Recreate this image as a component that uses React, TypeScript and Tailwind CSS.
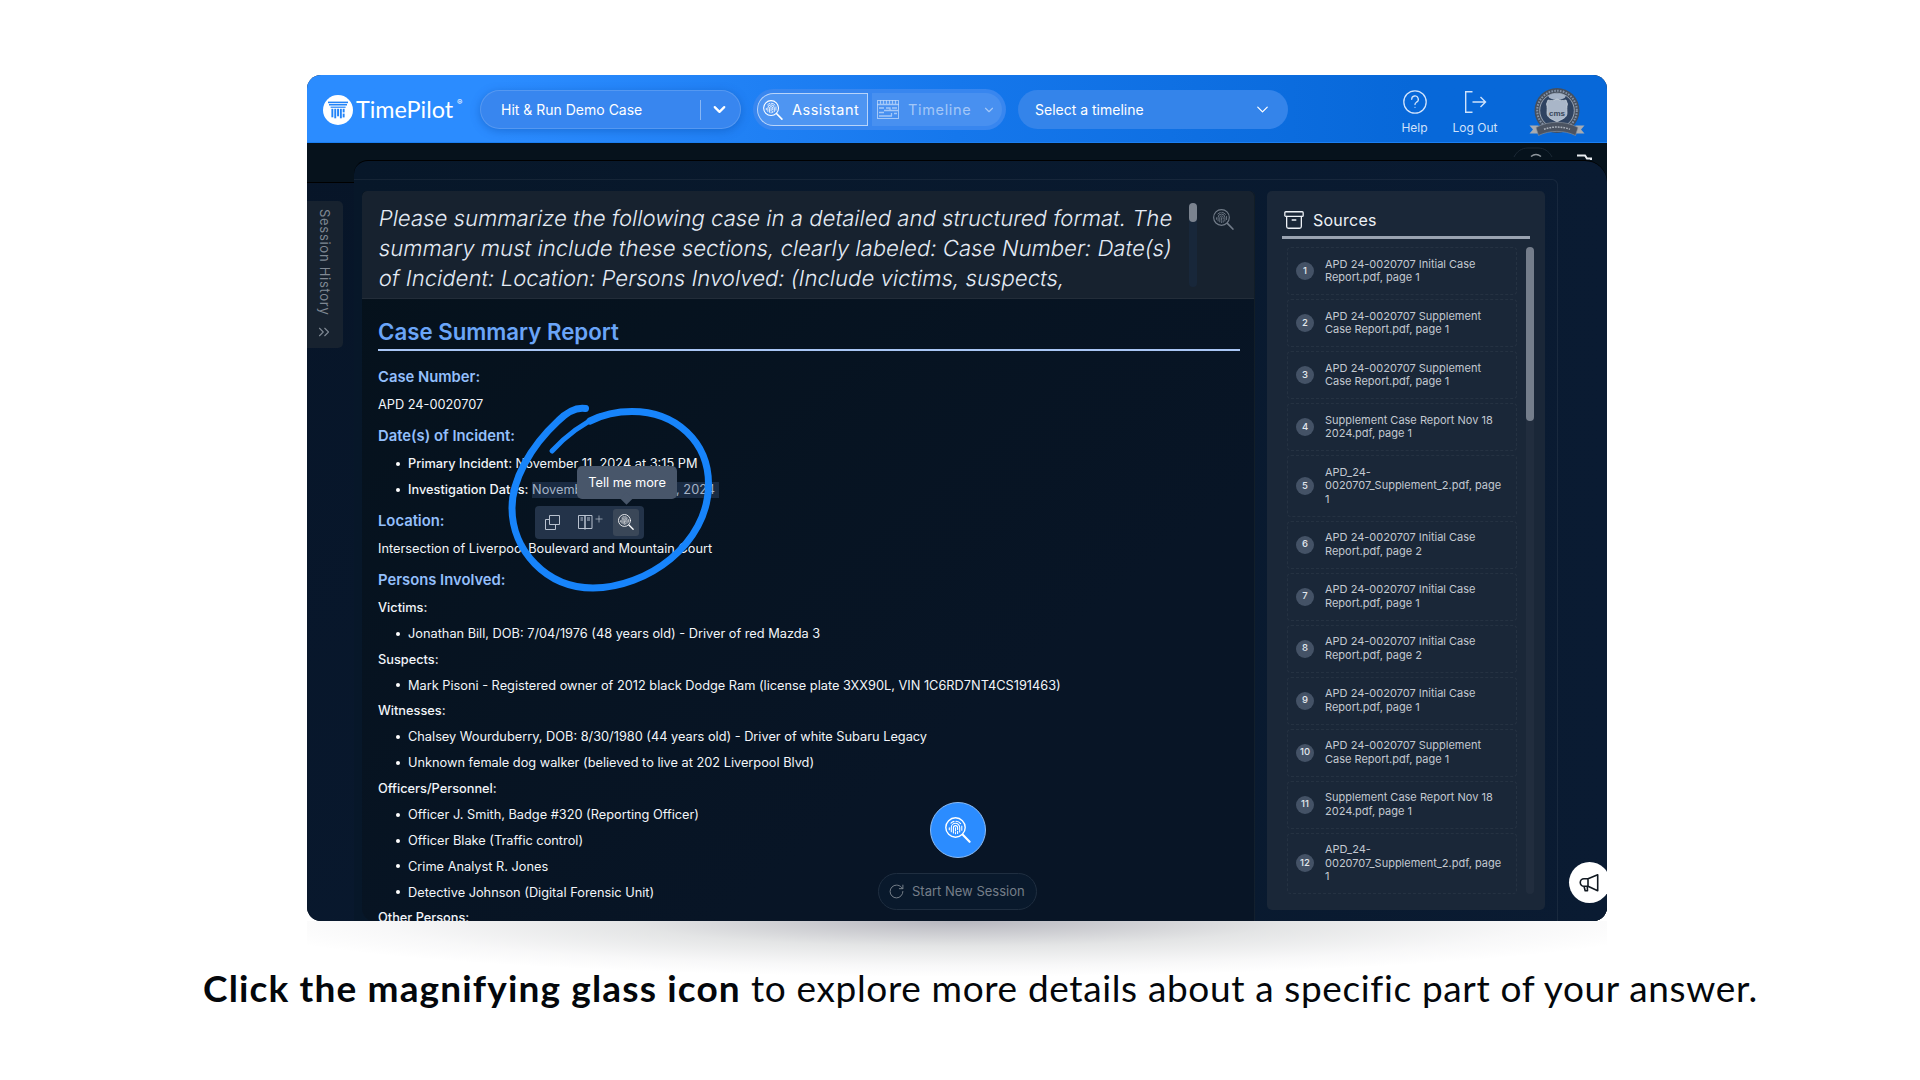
import { Archive, ChevronDown, ChevronsRight, RotateCw } from 'lucide-react'

const sources = [
  'APD 24-0020707 Initial Case Report.pdf, page 1',
  'APD 24-0020707 Supplement Case Report.pdf, page 1',
  'APD 24-0020707 Supplement Case Report.pdf, page 1',
  'Supplement Case Report Nov 18 2024.pdf, page 1',
  'APD_24-0020707_Supplement_2.pdf, page 1',
  'APD 24-0020707 Initial Case Report.pdf, page 2',
  'APD 24-0020707 Initial Case Report.pdf, page 1',
  'APD 24-0020707 Initial Case Report.pdf, page 2',
  'APD 24-0020707 Initial Case Report.pdf, page 1',
  'APD 24-0020707 Supplement Case Report.pdf, page 1',
  'Supplement Case Report Nov 18 2024.pdf, page 1',
  'APD_24-0020707_Supplement_2.pdf, page 1',
]

const persons = [
  { label: 'Victims:', items: ['Jonathan Bill, DOB: 7/04/1976 (48 years old) - Driver of red Mazda 3'] },
  {
    label: 'Suspects:',
    items: ['Mark Pisoni - Registered owner of 2012 black Dodge Ram (license plate 3XX90L, VIN 1C6RD7NT4CS191463)'],
  },
  {
    label: 'Witnesses:',
    items: [
      'Chalsey Wourduberry, DOB: 8/30/1980 (44 years old) - Driver of white Subaru Legacy',
      'Unknown female dog walker (believed to live at 202 Liverpool Blvd)',
    ],
  },
  {
    label: 'Officers/Personnel:',
    items: [
      'Officer J. Smith, Badge #320 (Reporting Officer)',
      'Officer Blake (Traffic control)',
      'Crime Analyst R. Jones',
      'Detective Johnson (Digital Forensic Unit)',
    ],
  },
  { label: 'Other Persons:', items: [] },
]

function FingerprintSearch({ className }: { className?: string }) {
  return (
    <svg className={className} viewBox="0 0 26 26" fill="none" stroke="currentColor" strokeLinecap="round" aria-hidden="true">
      <circle cx="10.5" cy="10.5" r="9.7" strokeWidth="1.4" />
      <path d="M17.8 17.8L24.6 24.8" strokeWidth="2.1" />
      <g strokeWidth="1.1">
        <path d="M6 6.2A6.3 6.3 0 0 1 9 4.4M11 4.2a6.3 6.3 0 0 1 4.6 2.4" />
        <path d="M4.3 10.8v2M16.8 9v4.2" />
        <path d="M6.3 14.8v-4.3a4.2 4.2 0 0 1 8.4 0v4.5" />
        <path d="M8.4 16v-5.3a2.1 2.1 0 0 1 4.2 0v1.8M12.6 14.4v2" />
        <path d="M10.5 10.8v3.2M10.5 15.6v1.2" />
      </g>
    </svg>
  )
}

function LogoMark() {
  return (
    <svg className="size-[30px]" viewBox="0 0 30 30" aria-hidden="true">
      <circle cx="15" cy="15" r="15" fill="#fff" />
      <g fill="#2384f8">
        <rect x="5" y="6.6" width="20" height="1.6" />
        <rect x="6" y="9" width="18" height="1.5" />
        <rect x="7.6" y="11.6" width="15" height="1.2" />
        <rect x="8.4" y="13.8" width="1.9" height="8.5" />
        <rect x="11.3" y="13.8" width="1.9" height="9.5" />
        <rect x="14.1" y="13.8" width="1.9" height="7.5" />
        <rect x="16.9" y="13.8" width="1.9" height="9.5" />
        <rect x="19.7" y="13.8" width="1.9" height="3.6" />
        <rect x="19.7" y="18.6" width="1.9" height="3.8" />
      </g>
    </svg>
  )
}

function Badge() {
  return (
    <svg className="h-[50px] w-[56px]" viewBox="0 0 56 50" aria-hidden="true">
      <circle cx="28" cy="23.5" r="22.5" fill="#46505f" />
      <circle cx="28" cy="23.5" r="19.8" fill="none" stroke="#8593a8" strokeWidth="2" strokeDasharray="1.6 1.3" />
      <circle cx="28" cy="23.5" r="17.3" fill="#2f4361" stroke="#b3bdc9" strokeWidth=".8" />
      <ellipse cx="28" cy="9.6" rx="8.5" ry="3.2" fill="#a4b2c6" />
      <path d="M19 13c3 1 6 .4 9-1 3 1.400 6 2 9 1l1.500 4c-1 3-.5 6-.5 9 0 5-5 6-10 9-5-3-10-4-10-9 0-3 .5-6-.5-9z" fill="#a9b6c8" stroke="#cfd7e0" strokeWidth=".7" />
      <text x="28" y="29" textAnchor="middle" fontFamily="Liberation Sans" fontWeight="700" fontSize="8" fill="#39465a">cms</text>
      <path d="M.5 38.500h9v8h-9l3.500-4zM55.500 38.500h-9v8h9l-3.500-4z" fill="#a8abb0" />
      <path d="M7 40.500c13-7 29-7 42 0l-2.500 8c-11-5.500-26-5.500-37 0z" fill="#4b5361" stroke="#8a929e" strokeWidth=".6" />
      <path d="M15 42.300c8-3 18-3 26 0" fill="none" stroke="#a9b0ba" strokeWidth="1.500" strokeDasharray="1.800 1" />
    </svg>
  )
}

function Header() {
  return (
    <header className="flex h-[68px] items-center border-b border-[#1b7ff2] bg-gradient-to-r from-[#2b8cff] from-15% via-[#1577ec] via-50% to-[#0768d9] to-85% pt-[2px] pl-4 text-white">
      <LogoMark />
      <span className="ml-[3px] w-[97px] whitespace-nowrap font-[Lato] text-[23.400px] leading-none">TimePilot</span>
      <span className="-mt-4 ml-[4px] w-[23px] text-[8px]">®</span>

      <div className="flex h-[39px] w-[261px] items-center rounded-full border border-white/15 bg-[#3886ef] pl-5 shadow-[0_2px_10px_rgba(0,60,150,0.35)]">
        <span className="text-sm">Hit &amp; Run Demo Case</span>
        <span className="ml-auto h-5 w-px bg-white/40" />
        <ChevronDown className="mr-[11px] ml-[9px] size-[19px]" strokeWidth={2.8} />
      </div>

      <div className="ml-[12px] flex h-[41px] w-[253px] items-center gap-1 rounded-full bg-[#3886ef] px-1">
        <div className="flex h-[33px] w-[111px] items-center rounded-l-full rounded-r-[4px] border border-white/60 bg-[#4e95f2] pl-[5px]">
          <FingerprintSearch className="size-5" />
          <span className="ml-[9px] text-[14.500px] tracking-[0.035em]">Assistant</span>
        </div>
        <div className="flex h-[33px] w-[130px] items-center rounded-l-[4px] rounded-r-full bg-[#4890f0] pl-[5px] text-white/50">
          <svg className="h-[19px] w-[22px]" viewBox="0 0 22 19" fill="none" stroke="currentColor" aria-hidden="true">
            <rect x=".5" y=".5" width="21" height="18" />
            <path d="M.5 4.500h21M3.500.5v4M6.500.5v4M9.500.5v4M12.500.5v4M15.500.5v4M18.500.5v4M2 8h5M7 10.500h14M9 8h4v2.500M15 8h5M2 12.500h5M2 16h13M14.500 13v3M17 13.500h3" strokeWidth="1.300" />
          </svg>
          <span className="ml-[9px] text-[14.500px] tracking-[0.045em]">Timeline</span>
          <ChevronDown className="ml-[11px] size-[14px]" />
        </div>
      </div>

      <div className="ml-[12px] flex h-[39px] w-[270px] items-center justify-between rounded-full bg-[#3484ea] pr-[16px] pl-[17px]">
        <span className="text-sm">Select a timeline</span>
        <ChevronDown className="size-[19px]" strokeWidth={1.6} />
      </div>

      <div className="ml-auto flex items-center text-[#cfe2fb]">
        <div className="flex w-[45px] flex-col items-center gap-[8px] pt-1">
          <svg className="size-6" viewBox="0 0 24 24" fill="none" stroke="currentColor" strokeWidth="1.300" aria-hidden="true">
            <circle cx="12" cy="12" r="11.200" />
            <path d="M8.700 9.300a3.300 3.300 0 1 1 4.800 2.900c-1 .6-1.500 1.100-1.500 2.300" strokeLinecap="round" />
            <circle cx="12" cy="17.300" r=".6" fill="currentColor" stroke="none" />
          </svg>
          <span className="text-xs leading-none">Help</span>
        </div>
        <div className="ml-[8px] flex w-[60px] flex-col items-center gap-[8px] pt-1">
          <svg className="size-6" viewBox="0 0 24 24" fill="none" stroke="currentColor" strokeWidth="1.400" aria-hidden="true">
            <path d="M9.500 1.700H2.700v20.500h6.800M9.500 12h13M17.500 7l5 5-5 5" />
          </svg>
          <span className="text-xs leading-none">Log Out</span>
        </div>
        <div className="mr-[22px] ml-[24px] pt-[5px]">
          <Badge />
        </div>
      </div>
    </header>
  )
}

function Prompt() {
  const lines = [
    'Please summarize the following case in a detailed and structured format. The',
    'summary must include these sections, clearly labeled: Case Number: Date(s)',
    'of Incident: Location: Persons Involved: (Include victims, suspects,',
  ]
  return (
    <div className="flex h-[108px] rounded-t-[5px] border-b border-white/5 bg-[#17222f] pt-3 pl-[16px]">
      <div className="h-[84px] w-[811px] text-[22px] leading-[29.8px] font-[340] tracking-[0.08px] text-[#e4ebf5]">
        {lines.map((line) => (
          <p key={line} className="relative top-px left-px w-max origin-left -skew-x-[10deg] whitespace-nowrap">{line}</p>
        ))}
      </div>
      <div className="h-[84px] w-2 rounded-full bg-[#18273a]">
        <div className="h-[19px] rounded-full bg-[#7b838f]" />
      </div>
      <FingerprintSearch className="mt-[6px] ml-[16px] size-[21px] text-[#717b88]" />
    </div>
  )
}

function Section({ children, className }: { children: string; className?: string }) {
  return <h3 className={`h-[28px] text-[14.8px] leading-[27px] font-semibold text-[#93bffb] ${className ?? ''}`}>{children}</h3>
}

function Item({ children }: { children: React.ReactNode }) {
  return (
    <li className="flex h-[25.900px] items-center pl-[18px]">
      <span className="mr-2 size-[4px] rounded-full bg-white" />
      {children}
    </li>
  )
}

// Toolbar that opens under a text selection
function SelectionToolbar() {
  return (
    <div className="absolute top-[24px] left-[3px] flex h-[33px] w-[109px] items-center rounded-[4px] bg-[#233349] text-[#b9c2cf]">
      <svg className="ml-[10px] size-[15px]" viewBox="0 0 15 15" fill="none" stroke="currentColor" aria-hidden="true">
        <path d="M4.500.5h10v9h-10zM4.500 4.500h-4v10h10v-5" />
      </svg>
      <svg className="ml-[18px] h-[16px] w-[26px]" viewBox="0 0 26 16" fill="none" stroke="currentColor" aria-hidden="true">
        <path d="M.5 1.500h6.500v13H.5zM7 1.500h7v13H7zM2.500 4h2.500M2.500 6h2.500M9 4h3M9 6h3" />
        <path d="M6 15h2M17.500 5h7M21 1.500v7" opacity=".7" />
      </svg>
      <span className="ml-[9px] flex h-[27px] w-[26px] items-center justify-center rounded-[3px] bg-[#3a4758] text-white">
        <FingerprintSearch className="size-4" />
      </span>
      <div className="absolute -top-[40px] left-[42px] flex h-[33px] w-[100px] items-center justify-center rounded-[5px] bg-[#48566a] text-[12.800px] text-white">
        Tell me more
        <span className="absolute -bottom-[4px] left-[45px] size-[9px] rotate-45 bg-[#48566a]" />
      </div>
    </div>
  )
}

function Report() {
  return (
    <div className="relative flex-1 overflow-hidden pr-[14px] pl-[16px] text-[12.770px] text-[#f2f5f9]">
      <h2 className="mt-[17px] h-[35px] border-b-2 border-[#a9c6f5] text-[22.250px] leading-[32px] font-semibold text-[#6aa5f8]">
        Case Summary Report
      </h2>
      <Section className="mt-[13px]">Case Number:</Section>
      <p className="h-[26px] leading-[26px]">APD 24-0020707</p>
      <Section className="mt-[5px]">Date(s) of Incident:</Section>
      <ul>
        <Item>
          <span className="font-medium">Primary Incident:</span>&nbsp;November 11, 2024 at 3:15 PM
        </Item>
        <Item>
          <span className="font-medium">Investigation Dates:</span>&nbsp;
          <span className="relative flex h-4 w-[187px] items-center justify-between bg-[#1a2b42] pr-1 text-[#a5b3c6]">
            <span>November 1</span>
            <span>8, 2024</span>
            <SelectionToolbar />
          </span>
        </Item>
      </ul>
      <Section className="mt-[5px]">Location:</Section>
      <p className="h-[26px] leading-[26px]">Intersection of Liverpool Boulevard and Mountain Court</p>
      <Section className="mt-[5px]">Persons Involved:</Section>
      {persons.map(({ label, items }) => (
        <div key={label}>
          <h4 className="h-[25.850px] leading-[26px] font-medium">{label}</h4>
          <ul>
            {items.map((item) => (
              <Item key={item}>{item}</Item>
            ))}
          </ul>
        </div>
      ))}

      {/* Hand-drawn ring round the toolbar */}
      <svg className="pointer-events-none absolute top-[101px] left-[138px] h-[200px] w-[220px]" viewBox="500 400 220 200" fill="none" strokeLinecap="round" stroke="#1784fb" aria-hidden="true">
        <path d="M585.500 408.500C576 407 567 412 558 421C530 447 512 480 512 508C512 550 546 588 593 588C646 588 708.500 545 708.500 484C708.500 442 676 411.500 632 411.500C616 411.500 602 415 590 421" strokeWidth="7" />
        <path d="M600 416C581 424 564 438 552 451" strokeWidth="5" />
      </svg>
    </div>
  )
}

function Sources() {
  return (
    <aside className="flex h-[719px] w-[278px] flex-col rounded-[5px] bg-[#1a2738] pl-[15px]">
      <div className="mt-[14px] flex h-[34px] w-[248px] items-center border-b-[3px] border-[#9aa3b1] pb-px text-[#eef2f7]">
        <Archive className="ml-[1px] size-[22px]" strokeWidth={1.400} />
        <span className="ml-[8px] text-base tracking-[0.015em]">Sources</span>
      </div>
      <div className="mt-[8px] flex">
        <ol className="ml-[5px] flex w-[230px] flex-col gap-[4px]">
          {sources.map((name, i) => (
            <li key={i} className="flex items-center rounded-[4px] border border-dashed border-white/5 py-[9.500px] pl-[8px]">
              <span className="flex size-[18px] shrink-0 items-center justify-center rounded-full bg-[#445266] text-[9.500px] font-medium text-[#e3e8ee]">{i + 1}</span>
              <span className="ml-[11px] w-[182px] text-[11px] leading-[13.500px] text-[#c3c9d1]">{name}</span>
            </li>
          ))}
        </ol>
        <div className="ml-[9px] h-[647px] w-[8px] rounded-full bg-white/[0.03]">
          <div className="h-[174px] rounded-full bg-[#747d8b]" />
        </div>
      </div>
    </aside>
  )
}

export default function App() {
  return (
    <div className="relative h-[1080px] w-[1920px] overflow-hidden bg-white font-[Inter,sans-serif]">
      <main className="relative mt-[75px] ml-[307px] flex h-[846px] w-[1300px] flex-col overflow-hidden rounded-[14px] bg-[#06121c]">
        <Header />
        <div className="flex h-[17px] justify-end bg-[#06121c]">
          <svg className="h-[17px] w-[110px]" viewBox="0 0 110 17" fill="none" aria-hidden="true">
            <path d="M17 14c3-6 8-9 14-9h10c6 0 11 3 14 9" stroke="#1c2935" />
            <path d="M34 13.500c3-2.500 7-2.500 10 0" stroke="#8e959c" strokeWidth="1.500" />
            <path d="M80 12.500h8l2 3h4v2" stroke="#e8ecf0" strokeWidth="2" />
          </svg>
        </div>
        <div className="flex min-h-0 flex-1 bg-gradient-to-br from-[#071528] to-[#0a1b32]">
          <div className="w-[47px] shrink-0">
            <div className="h-[23px] border-b border-black bg-[#06121c]" />
            <div className="mt-[18px] flex h-[147px] w-9 flex-col items-center rounded-r-[5px] bg-[#17222f] pt-2 pr-[2px] text-[#7f8893]">
              <span className="h-[107px] text-[13px] leading-none tracking-[0.055em] [writing-mode:vertical-rl]">Session History</span>
              <ChevronsRight className="mt-[7px] size-[18px]" strokeWidth={1.500} />
            </div>
          </div>
          <div className="min-w-0 flex-1 bg-[#06121c]">
            <div className="h-full rounded-tl-[14px] rounded-tr-[22px] border-t border-black bg-gradient-to-r from-[#071729] to-[#0a1b32] pt-[18px]">
              <div className="flex h-full w-[1204px] gap-[12px] rounded-tr-[6px] border-t border-r border-white/[0.06] pt-[11px] pl-[8px]">
                <section className="flex h-[731px] w-[893px] flex-col overflow-hidden rounded-t-[5px] rounded-bl-[14px] border-r border-white/5 bg-gradient-to-br from-[#05111b] to-[#081526] to-70%">
                  <Prompt />
                  <Report />
                </section>
                <Sources />
              </div>
            </div>
          </div>
        </div>

        {/* Floating actions */}
        <div className="absolute bottom-[11px] left-[571px] flex flex-col items-center gap-[15px]">
          <button className="flex size-14 items-center justify-center rounded-full border border-[#8cbcf5] bg-[#2b8cff] text-white">
            <FingerprintSearch className="size-[26px]" />
          </button>
          <button className="flex h-[37px] w-[159px] items-center rounded-full border border-[#1f2e40] bg-[#09192c] pl-[9px] text-[13px] text-[#757e89]">
            <RotateCw className="mr-[7px] size-[17px]" strokeWidth={1.400} />
            Start New Session
          </button>
        </div>
        <button className="absolute -right-[3px] bottom-[18px] flex size-[41px] items-center justify-center rounded-full bg-white pr-[2px] text-[#101820]">
          <svg className="size-5" viewBox="0 0 20 20" fill="none" stroke="currentColor" strokeWidth="1.600" strokeLinejoin="round" aria-hidden="true">
            <path d="M18.700 1.800v16L9 13.300V5.800zM9 5.800H5a3.750 3.750 0 0 0 0 7.500h4M5 13.300l1.200 4.500H8.500l-.2-4.500" />
          </svg>
        </button>
      </main>

      <div className="ml-[307px] h-[56px] w-[1300px] bg-[radial-gradient(ellipse_56%_100%_at_50%_0%,rgba(30,30,55,0.32),rgba(30,40,45,0.12)_45%,rgba(30,30,50,0.03)_80%,transparent)]" />
      <p className="-mt-[13px] ml-[203px] whitespace-nowrap font-[Lato] text-[37px] leading-[48px] tracking-[0.640px] text-[#04070b]">
        <strong className="font-bold tracking-[1.150px]">Click the magnifying glass icon</strong> to explore more details about a specific part of your answer.
      </p>
    </div>
  )
}
